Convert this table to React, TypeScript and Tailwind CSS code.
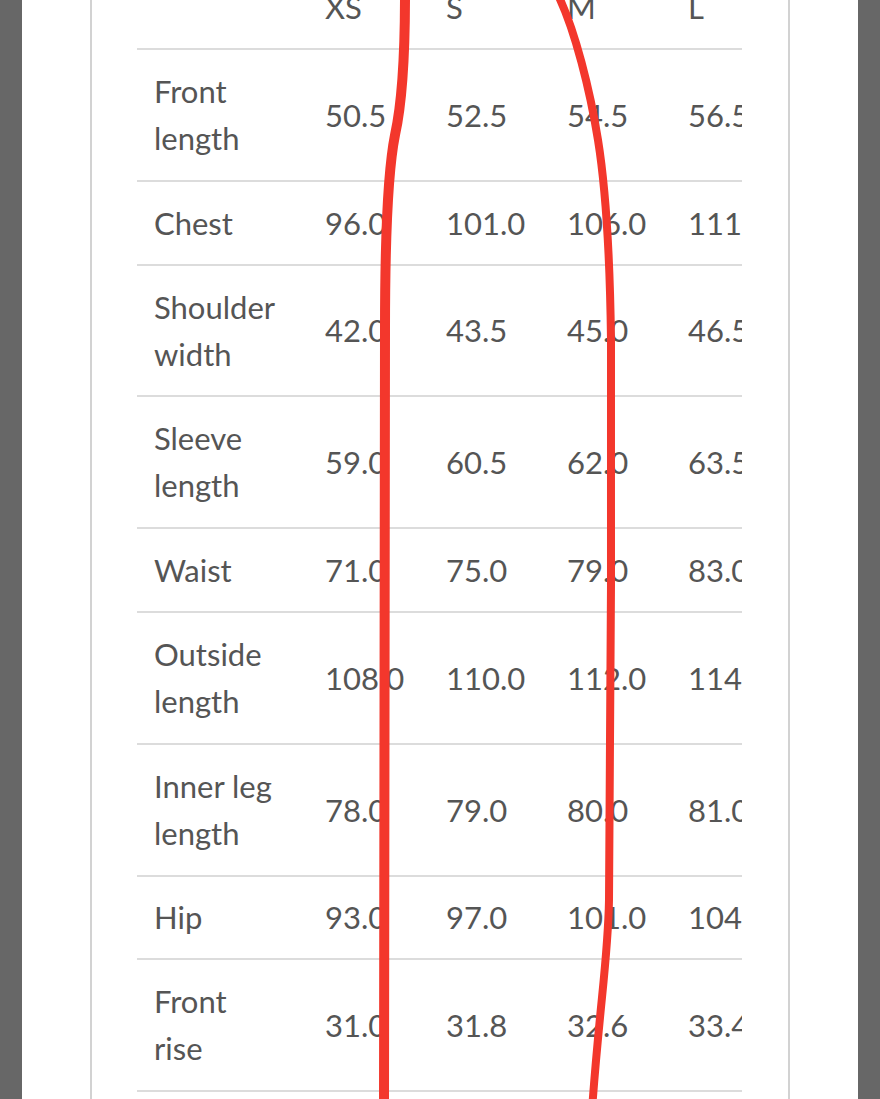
import React from "react";

const rows: { label: string[]; values: string[]; h: string }[] = [
  { label: ["Front", "length"], values: ["50.5", "52.5", "54.5", "56.5"], h: "h-[132px]" },
  { label: ["Chest"], values: ["96.0", "101.0", "106.0", "111.0"], h: "h-[84px]" },
  { label: ["Shoulder", "width"], values: ["42.0", "43.5", "45.0", "46.5"], h: "h-[131px]" },
  { label: ["Sleeve", "length"], values: ["59.0", "60.5", "62.0", "63.5"], h: "h-[132px]" },
  { label: ["Waist"], values: ["71.0", "75.0", "79.0", "83.0"], h: "h-[84px]" },
  { label: ["Outside", "length"], values: ["108.0", "110.0", "112.0", "114.0"], h: "h-[132px]" },
  { label: ["Inner leg", "length"], values: ["78.0", "79.0", "80.0", "81.0"], h: "h-[132px]" },
  { label: ["Hip"], values: ["93.0", "97.0", "101.0", "104.0"], h: "h-[83px]" },
  { label: ["Front", "rise"], values: ["31.0", "31.8", "32.6", "33.4"], h: "h-[132px]" },
  { label: ["Back", "rise"], values: ["38.0", "38.8", "39.6", "40.4"], h: "h-[132px]" },
];

export default function App() {
  return (
    <div className="relative w-[880px] h-[1099px] overflow-hidden bg-[#676767] px-[22px]">
      <div className="h-full bg-white px-[68px]">
        <div className="h-full border-x-2 border-[#d2d2d2] bg-white px-[45px] overflow-hidden">
          <div
            className="w-[605px] overflow-hidden mt-[-34px] text-[#555555] text-[31px]"
            style={{ fontFamily: "Lato, 'Noto Sans', sans-serif" }}
          >
            <div className="w-[700px]">
              <div className="flex h-[84px] items-center border-b-2 border-[#dcdcdc]">
                <div className="w-[173px] shrink-0" />
                {["XS", "S", "M", "L"].map((s) => (
                  <div key={s} className="w-[121px] shrink-0 pl-[15px]">
                    {s}
                  </div>
                ))}
              </div>
              {rows.map((r, i) => (
                <div key={i} className={`flex items-center border-b-2 border-[#dcdcdc] ${r.h}`}>
                  <div className="w-[173px] shrink-0 pl-[17px] leading-[47px]">
                    {r.label.map((l, j) => (
                      <div key={j}>{l}</div>
                    ))}
                  </div>
                  {r.values.map((v, j) => (
                    <div key={j} className="w-[121px] shrink-0 pl-[15px] whitespace-nowrap">
                      {v}
                    </div>
                  ))}
                </div>
              ))}
            </div>
          </div>
        </div>
      </div>
      <svg
        className="absolute left-0 top-0 pointer-events-none"
        width="880"
        height="1099"
        viewBox="0 0 880 1099"
        fill="none"
      >
        <path
          d="M405,-5 C405,70 401,108 395,135 C388,170 385,230 385,330 C385,500 383,800 384,1110"
          stroke="#f3372c"
          strokeWidth="10"
          strokeLinecap="round"
        />
        <path
          d="M558,-5 C575,30 590,90 598,140 C606,190 610,260 611,340 C612,500 610,800 609,900 C608,960 600,1000 592,1110"
          stroke="#f3372c"
          strokeWidth="8"
          strokeLinecap="round"
        />
      </svg>
    </div>
  );
}
